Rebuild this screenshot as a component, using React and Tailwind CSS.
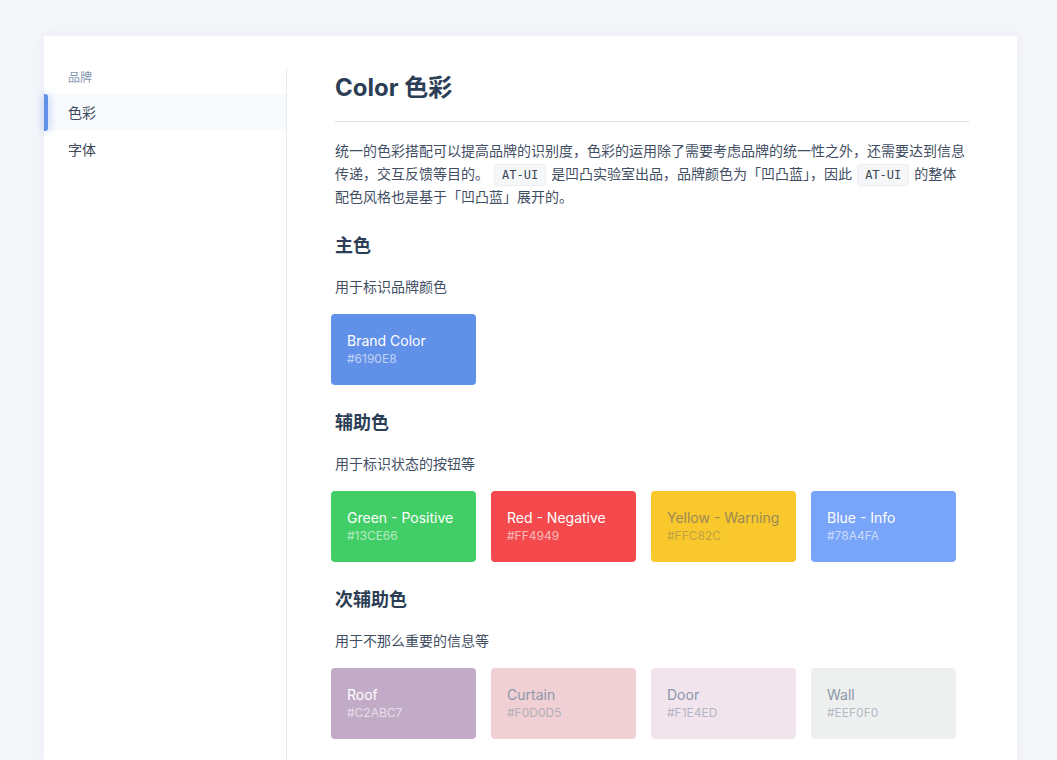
import React from "react";

const primary = [{ name: "Brand Color", hex: "#6190E8", bg: "bg-[#6190e8]", text: "text-white" }];

const secondary = [
  { name: "Green - Positive", hex: "#13CE66", bg: "bg-[#42ce66]", text: "text-white" },
  { name: "Red - Negative", hex: "#FF4949", bg: "bg-[#f44a4e]", text: "text-white" },
  { name: "Yellow - Warning", hex: "#FFC82C", bg: "bg-[#f8c82d]", text: "text-[#9c8a55]" },
  { name: "Blue - Info", hex: "#78A4FA", bg: "bg-[#78a4fa]", text: "text-white" },
];

const tertiary = [
  { name: "Roof", hex: "#C2ABC7", bg: "bg-[#c2abc7]", text: "text-white" },
  { name: "Curtain", hex: "#F0D0D5", bg: "bg-[#f0d0d5]", text: "text-[#8d98a8]" },
  { name: "Door", hex: "#F1E4ED", bg: "bg-[#f1e4ed]", text: "text-[#8d98a8]" },
  { name: "Wall", hex: "#EEF0F0", bg: "bg-[#eef0f0]", text: "text-[#8d98a8]" },
];

function Swatch({ c }) {
  return (
    <div className={`w-[145px] h-[71px] rounded-[4px] pl-4 pt-[17px] ${c.bg} ${c.text}`}>
      <div className="text-[14px] leading-[20px]">{c.name}</div>
      <div className="text-[12px] leading-[16px] opacity-60">{c.hex}</div>
    </div>
  );
}

function Section({ title, desc, colors }) {
  return (
    <div>
      <h2 className="text-[18px] leading-[24px] font-bold text-[#2c3e55]">{title}</h2>
      <p className="mt-[19px] text-[14px] leading-[20px] text-[#3f4e63]">{desc}</p>
      <div className="mt-[17px] -ml-1 flex gap-[15px]">
        {colors.map((c) => (
          <Swatch key={c.name} c={c} />
        ))}
      </div>
    </div>
  );
}

function Code({ children }) {
  return (
    <code className="mx-[5px] inline-block px-[7px] leading-[20px] rounded-[3px] border border-[#eceef2] bg-[#f6f7f9] text-[12px] text-[#3c4858] font-['DejaVu_Sans_Mono',monospace]">
      {children}
    </code>
  );
}

export default function App() {
  return (
    <div className="min-h-[760px] bg-[#f5f6fa] pt-[36px] pl-[44px] font-['Inter','Noto_Sans_CJK_SC',sans-serif]">
      <div className="w-[973px] min-h-[724px] bg-white shadow-[0_0_12px_rgba(200,210,230,0.25)] flex pt-[32px]">
        <aside className="w-[243px] shrink-0 border-r border-[#e9ecf0]">
          <div className="pl-6 mt-[2px] text-[12px] leading-[16px] text-[#8496b0] pb-[8px]">品牌</div>
          <div className="relative h-[37px] flex items-center pl-6 bg-[#f8fafd] text-[14px] text-[#3c4858]">
            <span className="absolute left-0 top-0 h-full w-[4px] rounded-r-[3px] bg-[#6190e8] shadow-[0_0_8px_rgba(97,144,232,0.6)]" />
            色彩
          </div>
          <div className="h-[37px] flex items-center pl-6 text-[14px] text-[#3c4858]">字体</div>
        </aside>
        <main className="flex-1 pl-[48px] pr-[48px] pt-[2px]">
          <h1 className="text-[24px] leading-[36px] font-bold text-[#2c3e55] pb-[15px] border-b border-[#d8e0e8]">
            Color 色彩
          </h1>
          <p className="mt-[18px] text-[14px] leading-[22.5px] text-[#3f4e63]">
            统一的色彩搭配可以提高品牌的识别度，色彩的运用除了需要考虑品牌的统一性之外，还需要达到信息传递，交互反馈等目的。
            <Code>AT-UI</Code>是凹凸实验室出品，品牌颜色为「凹凸蓝」，因此<Code>AT-UI</Code>的整体配色风格也是基于「凹凸蓝」展开的。
          </p>
          <div className="mt-[26px] flex flex-col gap-[26px]">
            <Section title="主色" desc="用于标识品牌颜色" colors={primary} />
            <Section title="辅助色" desc="用于标识状态的按钮等" colors={secondary} />
            <Section title="次辅助色" desc="用于不那么重要的信息等" colors={tertiary} />
          </div>
        </main>
      </div>
    </div>
  );
}
